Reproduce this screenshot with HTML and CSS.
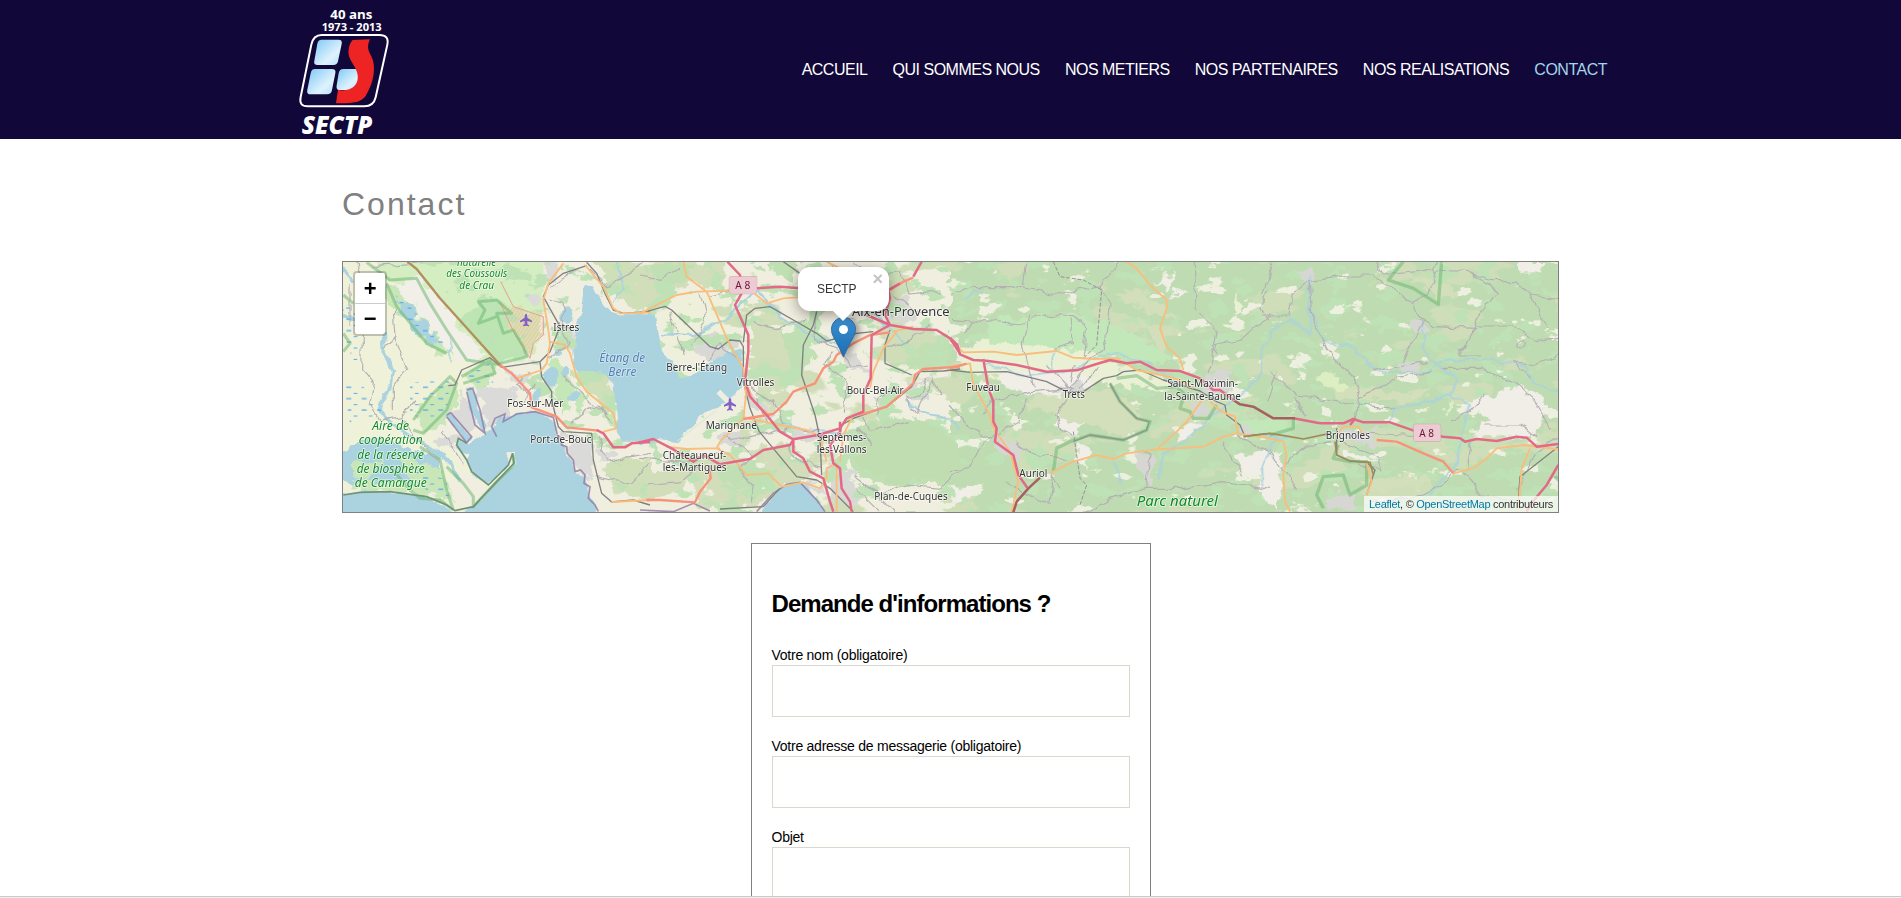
FILE: index.html
```html
<!DOCTYPE html>
<html lang="fr">
<head>
<meta charset="utf-8">
<title>Contact - SECTP</title>
<link rel="stylesheet" href="styles.css">
</head>
<body>
<header class="header">
  <svg class="logo" viewBox="0 0 390 417" width="130" height="139" role="img" aria-label="SECTP">
    <defs><linearGradient id="glass" x1="0" y1="0" x2="1" y2="1"><stop offset="0" stop-color="#7cc8f5"/><stop offset=".65" stop-color="#def2fd"/><stop offset="1" stop-color="#b5e0fa"/></linearGradient></defs>
    <text class="logo-small" x="151" y="56" font-size="37" textLength="126" lengthAdjust="spacingAndGlyphs">40 ans</text>
    <text class="logo-small" x="125" y="92" font-size="31" textLength="180" lengthAdjust="spacingAndGlyphs">1973 - 2013</text>
    <path d="M125 105H298Q328 105 322 134L287 292Q281 319 253 319H83Q56 319 62 291L94 134Q100 105 125 105Z" fill="none" stroke="#fff" stroke-width="6"/>
    <g fill="url(#glass)">
      <path d="M125 119H175Q188 119 185 132L174 184Q172 195 160 195H113Q100 195 103 182L112 131Q114 119 125 119Z"/>
      <path d="M105 207H155Q169 207 166 220L156 270Q154 283 141 283H92Q79 283 82 269L92 220Q94 207 105 207Z"/>
      <path d="M190 207H240L238 270H178Q166 272 171 250L176 220Q178 207 190 207Z"/>
    </g>
    <path d="M218 120L270 118C260 140 264 150 274 169C290 202 281 248 257 288C242 309 216 310 168 310L174 270C208 276 230 260 233 238C237 213 218 194 209 174C202 158 206 132 218 120Z" fill="#ee2424"/>
    <text class="logo-name" x="65" y="401" font-size="75" textLength="212" lengthAdjust="spacingAndGlyphs">SECTP</text>
  </svg>
  <nav class="nav">
    <a>ACCUEIL</a><a>QUI SOMMES NOUS</a><a>NOS METIERS</a><a>NOS PARTENAIRES</a><a>NOS REALISATIONS</a><a class="current">CONTACT</a>
  </nav>
</header>
<main class="main">
  <h1 class="title">Contact</h1>
  <div class="map">
    <svg class="map-art" viewBox="343 262 1215 250" width="1215" height="250">
      <defs>
        <filter id="wood" filterUnits="userSpaceOnUse" x="343" y="262" width="1215" height="250" color-interpolation-filters="sRGB">
          <feTurbulence type="fractalNoise" baseFrequency=".014 .028" numOctaves="5" seed="8"/>
          <feColorMatrix values="0 0 0 0 .81  0 0 0 0 .87  0 0 0 0 .72  22 0 0 0 -13"/>
          <feComposite in2="SourceAlpha" operator="in"/>
        </filter>
        <filter id="grass" filterUnits="userSpaceOnUse" x="343" y="262" width="1215" height="250" color-interpolation-filters="sRGB">
          <feTurbulence type="fractalNoise" baseFrequency=".04 .06" numOctaves="5" seed="23"/>
          <feColorMatrix values="0 0 0 0 .745  0 0 0 0 .885  0 0 0 0 .71  0 22 0 0 -13"/>
          <feComposite in2="SourceAlpha" operator="in"/>
        </filter>
        <filter id="clearing" filterUnits="userSpaceOnUse" x="343" y="262" width="1215" height="250" color-interpolation-filters="sRGB">
          <feTurbulence type="fractalNoise" baseFrequency=".035 .06" numOctaves="5" seed="41"/>
          <feColorMatrix values="0 0 0 0 .93  0 0 0 0 .94  0 0 0 0 .87  0 0 24 0 -16.2"/>
          <feComposite in2="SourceAlpha" operator="in"/>
        </filter>
        <filter id="rough" filterUnits="userSpaceOnUse" x="330" y="250" width="1240" height="275" color-interpolation-filters="sRGB">
          <feTurbulence type="fractalNoise" baseFrequency=".09" numOctaves="4" seed="3" result="n"/>
          <feDisplacementMap in="SourceGraphic" in2="n" scale="16" xChannelSelector="R" yChannelSelector="G"/>
        </filter>
        <filter id="wiggle" filterUnits="userSpaceOnUse" x="330" y="250" width="1240" height="275" color-interpolation-filters="sRGB">
          <feTurbulence type="fractalNoise" baseFrequency=".07" numOctaves="2" seed="5" result="n"/>
          <feDisplacementMap in="SourceGraphic" in2="n" scale="9" xChannelSelector="R" yChannelSelector="G"/>
        </filter>
        <pattern id="marsh" width="46" height="34" patternUnits="userSpaceOnUse"><path d="M3 6h15M25 24h11" stroke="#4ba6f0" stroke-width="3"/></pattern>
        <pattern id="hatch" width="9" height="9" patternUnits="userSpaceOnUse" patternTransform="rotate(35)"><path d="M0 0v9" stroke="#e9a892" stroke-width="2"/></pattern>
        <path id="plane" d="M0-19C4-19 4-12 4-7L18 2V7L4 3V12L9 16V19L0 17L-9 19V16L-4 12V3L-18 7V2L-4-7C-4-12-4-19 0-19Z" fill="#8461c4"/>
        <g id="tile-west-sea">
          <path d="M765 345L790 350 820 395 840 425 870 433H965V815L880 815 860 790 862 745 850 640 825 605 740 602 733 540 740 450 755 435Z"/>
          <path d="M480 785L510 745 560 732 615 725 670 742 682 795 710 845 735 905 765 915 780 980 805 1040H370L430 1010 500 935 552 880 555 848 540 850 535 885 475 945 425 905 410 870 415 850 385 835 380 810 420 820 465 795Z"/>
          <path d="M30 975L90 965 180 965 290 980 350 1005 375 1035H30Z"/>
          <path d="M350 735L362 728 425 805 410 820ZM408 660L425 655 450 720 470 770 460 790 435 760Z"/>
          <ellipse cx="710" cy="437" rx="19" ry="25"/><ellipse cx="666" cy="620" rx="23" ry="30"/><ellipse cx="704" cy="608" rx="10" ry="18"/><ellipse cx="730" cy="680" rx="19" ry="13"/><ellipse cx="620" cy="680" rx="10" ry="25"/><ellipse cx="682" cy="549" rx="8" ry="9"/>
        </g>
      </defs>

      <rect x="343" y="262" width="1215" height="250" fill="#f0eedf"/>
      <!-- land cover -->
      <g filter="url(#rough)">
        <g transform="translate(330 170) scale(.33333)">
          <path fill="#eff1d8" d="M0 240H240L500 590 300 780 420 900 300 960H0Z"/>
          <path fill="#d4edc1" d="M110 240H640V480L600 575 500 588 400 570 320 500 250 370 170 330Z"/>
          <path fill="#bde5b4" d="M400 460L450 390 520 390 550 500 590 555 500 583Z"/>
          <path fill="#c9e6b9" d="M120 350L220 340 300 420 360 560 300 540 230 450ZM395 610L480 570 495 620 450 660ZM260 720L370 620 385 680 340 770 270 790ZM60 900L160 860 260 850 370 1000 300 975 70 960Z"/>
          <path fill="#f1efe8" d="M180 340L280 320 400 480 470 560 400 580 340 530 260 420Z"/>
          <path fill="#abd3df" d="M195 390L240 400 320 510 310 530 240 470ZM20 850L130 800 330 860 330 910 270 940 20 930ZM30 420L90 440 70 455 30 445Z"/>
          <path fill="#c9e6b9" d="M70 870L160 880 120 930 60 920ZM200 850L330 900 360 970 240 930Z"/>
          <path fill="#dadad8" d="M640 250H690L680 350 650 330ZM700 460L735 480 725 570 690 500ZM520 595L600 610 590 650 550 640ZM400 665L440 760 400 800 360 760ZM430 650L560 650 530 740 480 770ZM700 830L790 800 790 940 740 890ZM690 790L780 800 700 815ZM590 365L625 385 620 405 595 390ZM800 840L850 830 860 860 810 870ZM310 810L400 790 420 810 330 830Z"/>
          <path fill="#cfdfb7" d="M780 250H960V410L900 420 850 350ZM720 600L830 610 855 720 780 680ZM820 880L960 870V990L850 960Z"/>
          <path fill="#c5e6b7" d="M660 580L690 570 740 650 700 740ZM840 720L860 720 860 790 820 750ZM730 640L770 690 740 750Z"/>
          <path fill="#dcdeb2" d="M510 397L560 415 640 440 640 495 610 520 600 565 550 485Z"/>
        </g>
        <g transform="translate(640 255) scale(.33333)">
          <path fill="#d2ddb9" d="M0 0H250L260 100 150 85 0 170ZM330 200L390 160 500 240 490 400 400 470 330 370ZM130 620L440 560 540 650 430 690 350 760 180 760ZM10 660L150 640 120 720 20 730Z"/>
          <path fill="#eff0da" d="M60 190L150 120 280 130 300 250 150 270 120 340 80 260Z"/>
          <path fill="#c0dfb2" d="M20 20L160 25 140 80 60 90ZM420 200L500 210 520 300 470 410ZM620 520L760 480 880 500 980 570V690L760 690 640 660ZM740 250L960 240V340L820 345 740 320ZM230 660L320 610 410 650 340 740ZM350 0L480 0 460 90Z"/>
          <path fill="#d8d8d5" d="M145 275L225 230 300 265 240 310 190 310ZM750 110L800 120 830 190 760 210 720 150ZM330 410L420 480 380 490 320 440ZM225 540L320 520 310 570 240 570ZM590 290L650 290 680 350 620 340ZM810 380L880 370 860 440 800 430ZM690 420L770 430 720 470ZM570 620L640 660 670 770 570 770ZM480 680L550 680 560 730ZM440 520L560 530 540 560 450 555Z"/>
        </g>
        <g transform="translate(950 255) scale(.33333)">
          <path fill="#bfdbb1" d="M0 0H1860V800H0Z"/>
        </g>
      </g>
      <path filter="url(#wood)" d="M650 262H1558V512H740V430L700 262Z"/>
      <path filter="url(#grass)" d="M420 262H1558V512H640Z"/>
      <path filter="url(#clearing)" d="M560 262H1558V512H640V430Z"/>
      <g filter="url(#rough)">
        <g transform="translate(640 255) scale(.33333)">
          <path fill="#bfddb1" d="M640 540L760 490 880 505 960 570V670L760 680 660 640Z"/>
        </g>
        <g transform="translate(950 255) scale(.33333)">
          <path fill="#eaf0d4" d="M20 280L210 220 320 240 500 330 600 355 700 400 460 390 240 400 40 340ZM850 140l20-15-5 60z"/>
          <path fill="#c2e8ba" d="M110 190L330 180 500 210 660 300 640 330 420 290 120 260ZM860 500L1000 480 1020 530 900 540Z"/>
          <path fill="#f1eee8" d="M150 350L400 350 430 390 330 440 160 400ZM320 460l50-20-20 60 60 10-30 30-60-20zM610 80l60-25-10 50zM680 100l40 10-50 20zM700 510L770 500 680 570ZM380 560l50 30-20 50-30-30zM860 600L990 590 960 670 870 650ZM1540 440L1720 390 1790 470 1760 540 1560 545 1620 490ZM930 610L1000 590 980 770 930 720ZM1170 580L1310 630 1180 610ZM0 680L60 700 20 760ZM1740 410L1790 440 1770 500 1720 460ZM1690 22h90v30h-70z"/>
          <path fill="#d6d7d3" d="M770 350L830 350 850 410 790 430 750 390ZM560 600L610 600 600 690 570 650ZM720 450L770 440 780 490 730 490ZM130 540L210 570 200 620 150 590ZM1160 530L1270 520 1280 570 1180 560ZM1050 50l40-10 10 40-40 10zM1380 190l40 0 10 40-40 10zM1130 730L1200 710 1220 765 1120 765ZM1340 330l60-8 10 30-50 5zM870 520l40-10 0 30-30 0zM340 400l60-20 10 30-60 10z"/>
          <path fill="#d2dfba" d="M200 440L330 420 480 400 600 500 520 550 340 490ZM1130 390L1380 410 1450 390 1400 440 1180 430ZM560 190L660 230 640 300ZM490 110L560 105 680 190 560 160ZM1230 680l200-20 20 30-180 20zM1370 60l130 30 30 40-60 0z"/>
          <path fill="#dcefc2" d="M1095 360l40-8 60 35-10 20-50-15zM1485 440l20-8-15 50-12 5z"/>
        </g>
      </g>

      <!-- water -->
      <g filter="url(#wiggle)" fill="#abd3df">
        <g transform="translate(330 170) scale(.33333)">
          <use href="#tile-west-sea"/>
          <g fill="none" stroke="#abd3df">
            <path stroke-width="10" d="M30 290L75 335M160 490L163 550 187 600 180 650 152 710 165 745 260 810 340 860 390 930"/>
            <path stroke-width="4" d="M860 280L880 350 850 400M360 500V580"/>
          </g>
        </g>
        <g transform="translate(640 255) scale(.33333)">
          <path d="M-10 185L45 185 60 270 120 370 160 365 200 330 240 305 300 280 312 340 305 400 270 435 195 470 110 560 50 555-10 570Z"/>
          <path d="M350 790L420 700 480 680 530 730 565 790Z"/>
          <g fill="none" stroke="#abd3df" stroke-width="6">
            <path d="M60 235L160 240 260 190 350 100 420 180 530 250 590 265M400 500L520 530 660 540M800 430L840 470 900 480 960 520M690 160L730 210 790 260"/>
          </g>
        </g>
        <g transform="translate(950 255) scale(.33333)" fill="none" stroke="#a9d2e0" stroke-width="5">
          <path d="M50 130l25-20 25-5M110 325L220 365 300 355 390 340 470 290 540 310 600 330 680 380M310 290v55M620 680L640 600 720 550 800 470 870 420 930 370 940 275 970 220 1020 190 1080 240 1080 60M1080 150L1120 260 1200 270 1280 350 1430 355 1460 325 1520 380 1500 420 1560 450 1530 580 1520 620 1440 720M1410 200L1430 300 1460 325 1560 310 1660 320 1720 330 1750 380 1825 415M1500 420L1330 465 1320 500M490 620l30 65M970 545L960 590 930 640 935 690M930 540L1020 550"/>
        </g>
      </g>
      <g transform="translate(330 170) scale(.33333)">
        <path fill="url(#marsh)" d="M190 360L330 500 350 540 250 490ZM390 610L480 580 490 640 440 660ZM240 640L360 620 350 740 240 740ZM45 400L90 440 80 600 50 520ZM40 640L100 650 160 730 60 760ZM200 880L350 930 360 1000 300 970Z"/>
        <path fill="url(#hatch)" d="M510 397L560 415 640 440 640 495 610 520 600 565 550 485Z"/>
        <path fill="none" stroke="#e7a28e" stroke-width="3" d="M512 335L550 410 640 440 640 495 610 520 600 565 550 485 510 397"/>
        <g fill="none" stroke="#65b36d" stroke-opacity=".5" stroke-width="9" stroke-linejoin="round">
          <path d="M110 277L180 330 260 325 300 400 350 480 410 570 500 583 590 560 580 530 550 480 520 490 500 430 545 430 500 390 445 395 465 420 445 460 500 440M170 340L200 410 290 520 350 550M395 620L480 570 495 610 400 640M250 750L300 680 360 620 380 640 350 720 280 790 250 780M40 375L70 400M40 545L60 520 40 490M370 1020L330 990 270 985 240 960 180 890M270 830L330 870 350 960 370 1020M430 1015L430 980 400 940 350 890M430 1010L500 935 552 885 548 850"/>
        </g>
        <path fill="none" stroke="#6f9573" stroke-width="5" d="M40 975L90 967 180 965 290 980 350 1005 375 1022 430 1010 500 935 552 880 548 850 535 885 475 945 425 905 410 870 380 825 385 805 410 820"/>
        <path fill="none" stroke="#9277a5" stroke-width="5" stroke-opacity=".8" d="M350 735L362 728 425 800 410 818 350 740M410 660L428 655 450 720 465 790 435 765 410 665M500 800L485 770 495 745 525 732 520 755 560 732 615 725 670 742 682 795 690 800 695 825 710 830 712 850 730 870 735 905 752 900 765 915 762 940 780 950 775 985 795 1005 805 1024"/>
      </g>
      <g transform="translate(640 255) scale(.33333)" fill="none">
        <path stroke="#9277a5" stroke-width="5" stroke-opacity=".8" d="M0 765L100 770 160 745 210 768M350 770L400 715 440 688 480 682 530 735 555 770"/>
        <path stroke="#f0eedf" stroke-width="16" d="M235 410L295 470M275 435L300 425"/>
        <path stroke="#d7e8cc" stroke-width="3" d="M110 560L230 465"/>
        <use href="#plane" x="270" y="448"/>
      </g>
      <use href="#plane" transform="translate(526 320) scale(.33333)"/>

      <!-- minor roads -->
      <g filter="url(#wiggle)" fill="none" stroke="#b4b0b4" stroke-width="3.5">
        <g transform="translate(330 170) scale(.33333)">
          <path d="M80 277L100 350 95 600 130 640 120 700 150 750 215 740 260 690M165 530L195 500 190 420M190 500L230 600 190 650 190 720M130 290L280 277M215 740L270 820 330 870M340 780L400 880M660 390L700 400 700 470 740 480M690 460L720 520 660 560M780 300L830 350 960 270M700 620L760 680 840 740M720 760L800 700 850 760M660 350L740 300M805 800L830 870 960 850M800 920L900 940 960 880M60 340V470M600 610L560 640 600 670M610 640L580 700"/>
        </g>
        <g transform="translate(640 255) scale(.33333)">
          <path d="M0 60L60 70 120 40M150 270L200 200 180 110M90 170L130 300M200 320L240 270 300 320M210 120L310 100M340 200L400 220 500 190M500 130L530 170 520 250 590 280 640 340M580 290L550 330 620 370 610 470M620 340L690 330M540 530L440 520 330 550 250 540M260 540L340 600 300 640M230 590L150 620 0 610M20 690L120 680 180 630M300 640L340 690 330 750M640 660L720 720 800 690 900 700 960 650M650 520L700 570M860 370L840 430 800 420 830 480 880 370 900 420M640 20L700 60 780 50 810 120 900 110M760 120L830 170 900 160M760 190L720 120 740 70M330 400L400 440 430 510M350 430L380 500M740 280L800 260 870 210M550 120L600 180 640 190M560 20L600 60 590 130M710 480L720 430 770 400M540 640L480 620 440 570M670 480L690 530 800 500M650 700L720 770M680 690L760 770"/>
        </g>
        <g transform="translate(950 255) scale(.33333)">
          <path d="M0 120L70 95 180 95 320 120 450 95 480 60 510 20M230 20L220 95M450 95L480 150 470 260 400 340 360 400M0 190L100 200 220 210 280 180 370 185 410 220 400 300M70 190L50 240M240 180L220 270 250 400M360 190L370 260 310 280M370 400L320 480 330 520 370 545M390 400L440 340M375 400L240 410 120 440M360 380L370 330M360 405L290 330M0 650L60 640 100 560 210 500 230 430M130 430L100 480M0 450L60 520 130 550M200 560L260 600 350 610M160 680L240 720 300 750 310 660 330 700M590 700L600 600 570 590M590 700L480 730 400 770M590 700L700 700 820 680 960 700M730 20L735 160 800 230 790 270 880 250 960 175M800 270L770 360M790 270L810 300M820 560L850 620 880 660M860 540L960 600M960 100L930 160 950 200"/>
          <path d="M940 120L970 20M930 180L1020 180 1030 120 1080 80 1190 60 1270 60 1380 140 1420 190 1360 320M1080 80L1090 200 1130 280 1190 350 1230 400 1220 460 1215 500M1280 20L1300 60 1400 50 1450 40 1460 20M1385 150L1460 80 1450 45 1560 50 1620 80 1700 80 1740 120 1825 130M1560 50L1640 110 1590 180 1580 210 1690 210 1760 260 1825 250M1410 190L1450 215 1580 220 1530 290M1740 120L1760 170 1800 220M1580 210L1530 300 1590 300M1270 350L1360 330 1430 320M1220 430L1290 400 1340 370 1450 350M960 350L1040 420 1220 450 1340 460M980 350L950 440M1040 430L1060 480M960 590L1040 700M1140 560L1050 580 1000 640M1180 560L1290 610 1290 650 1230 620M1220 530L1420 540M1480 340L1590 340 1690 380 1750 430 1800 520M1690 320L1740 370M1600 420L1560 470 1500 500M1520 640L1480 690 1420 720 1350 730 1260 750M1540 650L1600 720 1690 740M1550 640L1560 560M1760 540L1710 510 1600 510M1825 550L1760 590 1700 700M1825 300L1760 330 1690 320"/>
          <circle cx="1715" cy="268" r="11"/>
        </g>
      </g>
      <g transform="translate(950 255) scale(.33333)" fill="none">
        <g stroke="#69b46f" stroke-opacity=".5" stroke-width="10" stroke-linejoin="round">
          <path d="M480 385L510 440 560 490 600 500 590 525 520 555 420 540 360 560 320 580 310 650M500 370L560 362 620 400 680 395 720 435M700 430L690 460 720 470 730 490 775 490 800 450M1360 20L1315 75 1390 100 1465 148 1475 20M1030 490L1030 520 960 540M1165 570L1150 610 1200 620 1250 620 1250 690 1200 720 1180 660 1120 665 1100 720 1120 760M1815 665L1830 680"/>
        </g>
        <path stroke="#8b978c" stroke-width="4" d="M480 385L510 440 560 490 597 500 590 525 520 555 420 540 370 560"/>
        <path stroke="#9b8e9f" stroke-width="3" stroke-dasharray="12 5" d="M310 20L330 65 400 75 455 105 440 270 400 310M370 530L380 600 390 670 410 690 390 750"/>
      </g>

      <!-- railways -->
      <g fill="none" stroke="#808080" stroke-width="4" stroke-linejoin="round">
        <path transform="translate(330 170) scale(.33333)" d="M355 647L375 645 395 600 480 563 515 592 630 575 660 545 690 470 640 380 655 345 700 310 770 287M630 575L635 620 665 665 665 690 685 770 700 785 785 790 790 870 815 970 845 996 910 990 960 1005M770 277L800 310 825 370 850 420 880 430 960 424"/>
        <path transform="translate(640 255) scale(.33333)" d="M0 175L75 154 95 165 210 275 235 282 270 255 300 258 310 275 310 380 330 460 358 530 470 665 530 675 570 700 640 770M310 262L320 180 345 160 390 155 460 195 530 235 560 258 650 235 700 230M530 170L520 210 490 270 485 360 525 480 540 550 545 660M430 20L480 55 495 110M750 225L735 270 735 325 815 360M960 342L910 348 840 350 815 395 740 455 640 490 605 510 600 540M240 762L370 755 420 700"/>
        <path transform="translate(950 255) scale(.33333)" d="M0 345L60 352 170 350 290 380 350 410 400 410 460 370 500 362 520 350 570 345 640 375 750 408 800 440 825 450 830 480 870 510 885 545 910 540 960 535M1160 520L1160 600 1200 618 1250 622 1275 645 1250 720M1825 575L1710 665 1705 740"/>
      </g>

      <!-- main roads -->
      <g fill="none" stroke="#f9bd7c" stroke-width="5.5" stroke-linejoin="round">
        <path transform="translate(330 170) scale(.33333)" d="M700 280L655 340 640 390 655 480 660 520 650 580 635 600 560 625M660 515L705 525 720 550 740 620 770 665 850 730 860 775 820 785M765 285L820 350 850 415 870 430 960 428M845 996L960 990"/>
        <path transform="translate(640 255) scale(.33333)" d="M130 20L140 65 200 110 235 190 265 260 310 340 318 420 310 490 240 560 230 580 270 600 320 660 385 655 425 695 490 682 540 700 560 670 560 640 590 625 590 770M0 175L110 120 170 110 330 105 380 145 430 130 500 125M80 575L140 582 200 580 240 580M320 490L420 510 500 525 540 545 560 620M770 230L730 280 700 350 690 400M760 230L820 215M700 470L640 480 610 540 600 620M560 20L600 40M318 380L340 440 390 480"/>
        <path transform="translate(950 255) scale(.33333)" d="M0 255L40 292 130 290 200 300 320 288 370 308 430 312 500 310 560 345 640 362 690 375 730 400M530 20L560 40 600 90 650 135 650 160 630 220 650 275 690 310 700 345M300 655L370 620 440 600 490 612 530 595 620 583 760 575 820 545 860 535 960 550 1000 560 1010 600 1000 660 1005 740 1020 770M760 430L710 500 680 530 620 583M780 440L815 470 855 485 865 535M0 335L60 325 70 390 120 480 130 520 180 590 205 680 185 770M1160 540L1180 515 1225 515 1240 540M1250 625L1265 680 1250 720M1510 655L1570 640 1610 610 1640 580 1720 570 1825 583M1740 580L1715 640 1705 770"/>
      </g>
      <g fill="none" stroke="#f8937a" stroke-width="7" stroke-linejoin="round">
        <path transform="translate(330 170) scale(.33333)" stroke="#b1905e" d="M232 275L260 297 330 385 515 590"/>
        <path transform="translate(330 170) scale(.33333)" d="M510 585L545 610 600 670 605 712 680 740 710 772 805 782M950 990H960"/>
        <path transform="translate(640 255) scale(.33333)" d="M310 492L400 477 440 440 460 410 525 385 550 340 580 320 590 300 640 265 690 240 750 232M960 335L850 342 825 360 820 385 740 455 660 480M20 735L60 735 165 742 180 710 212 670 208 635M750 105L790 80 820 68"/>
        <path transform="translate(950 255) scale(.33333)" d="M0 340L50 326M1280 555L1340 560 1420 595 1480 620 1510 655"/>
      </g>
      <g fill="none" stroke="#e36a86" stroke-width="7.5" stroke-linejoin="round">
        <path transform="translate(330 170) scale(.33333)" d="M800 780L820 790 850 832 885 832 905 820 960 816"/>
        <path transform="translate(640 255) scale(.33333)" d="M262 20L300 60 305 115 285 150 325 240 325 290 315 380 330 425 380 480 420 530 460 553 535 540 600 520 620 490 670 470 670 420 692 370 695 240 750 210 820 222 890 225 930 250 960 295M350 100L420 95 480 100M680 180L750 210 735 180 750 130 745 105 780 85M845 20L820 65M-5 563L40 552 100 583 160 620 190 600 240 628 330 612 370 585 450 570 460 555 460 590 490 610 510 650 550 670 570 740 580 770M600 500L600 530 570 570 580 625 600 640 605 700 630 740 635 770M540 545L560 545"/>
        <path transform="translate(950 255) scale(.33333)" d="M0 248L22 270 30 298 70 315 110 317 200 330 290 350 380 346 430 330 480 315 530 325 570 320 620 345 690 348 750 370 790 405 810 405 850 435M100 312L115 400 130 440 130 500 140 520 135 560 190 600 205 660 232 698M1030 490L1110 505 1180 505 1210 492 1240 502 1320 502 1400 530 1480 545 1530 550 1545 560 1580 552 1640 558 1700 545 1730 548 1760 575 1825 567M1200 510L1215 492M1825 630L1790 690 1740 750 1730 770"/>
        <path transform="translate(950 255) scale(.33333)" stroke="#a85f60" d="M850 435L870 448 910 455 970 490 1035 490M270 668L235 700 200 740 190 772"/>
        <path transform="translate(950 255) scale(.33333)" stroke="#a18a58" stroke-width="5" d="M880 545L960 535 1020 545 1060 552 1140 535M1155 560L1160 600 1200 618 1260 622 1270 660"/>
      </g>

      <!-- labels -->
      <g class="labels" font-size="30">
        <g transform="translate(330 170) scale(.33333)">
          <g class="park" font-size="31"><text x="381" y="287" textLength="118" lengthAdjust="spacingAndGlyphs">naturelle</text><text x="349" y="321" textLength="183" lengthAdjust="spacingAndGlyphs">des Coussouls</text><text x="388" y="357" textLength="104" lengthAdjust="spacingAndGlyphs">de Crau</text></g>
          <g class="park" font-size="36"><text x="127" y="780" textLength="110" lengthAdjust="spacingAndGlyphs">Aire de</text><text x="86" y="823" textLength="192" lengthAdjust="spacingAndGlyphs">coopération</text><text x="82" y="866" textLength="200" lengthAdjust="spacingAndGlyphs">de la réserve</text><text x="80" y="908" textLength="204" lengthAdjust="spacingAndGlyphs">de biosphère</text><text x="74" y="952" textLength="216" lengthAdjust="spacingAndGlyphs">de Camargue</text></g>
          <g class="lake" font-size="36"><text x="808" y="575" textLength="137" lengthAdjust="spacingAndGlyphs">Étang de</text><text x="835" y="617" textLength="84" lengthAdjust="spacingAndGlyphs">Berre</text></g>
          <text x="670" y="484" textLength="78" lengthAdjust="spacingAndGlyphs">Istres</text><text x="532" y="712" textLength="168" lengthAdjust="spacingAndGlyphs">Fos-sur-Mer</text><text x="601" y="818" textLength="184" lengthAdjust="spacingAndGlyphs">Port-de-Bouc</text>
        </g>
        <g transform="translate(640 255) scale(.33333)">
          <text x="79" y="347" textLength="182" lengthAdjust="spacingAndGlyphs">Berre-l'Étang</text><text x="290" y="392" textLength="113" lengthAdjust="spacingAndGlyphs">Vitrolles</text><text x="197" y="523" textLength="154" lengthAdjust="spacingAndGlyphs">Marignane</text><text x="68" y="612" textLength="191" lengthAdjust="spacingAndGlyphs">Châteauneuf-</text><text x="68" y="649" textLength="192" lengthAdjust="spacingAndGlyphs">les-Martigues</text><text x="620" y="417" textLength="171" lengthAdjust="spacingAndGlyphs">Bouc-Bel-Air</text><text x="530" y="557" textLength="149" lengthAdjust="spacingAndGlyphs">Septèmes-</text><text x="530" y="593" textLength="150" lengthAdjust="spacingAndGlyphs">les-Vallons</text><text x="703" y="734" textLength="220" lengthAdjust="spacingAndGlyphs">Plan-de-Cuques</text><text x="636" y="182" font-size="37" textLength="293" lengthAdjust="spacingAndGlyphs">Aix-en-Provence</text>
          <rect x="268" y="65" width="82" height="51" rx="5" class="shield"/><text class="road" x="286" y="102" textLength="45" lengthAdjust="spacingAndGlyphs">A 8</text>
        </g>
        <g transform="translate(950 255) scale(.33333)">
          <text x="49" y="409" textLength="101" lengthAdjust="spacingAndGlyphs">Fuveau</text><text x="338" y="430" textLength="67" lengthAdjust="spacingAndGlyphs">Trets</text><text x="208" y="665" textLength="84" lengthAdjust="spacingAndGlyphs">Auriol</text><text x="652" y="397" textLength="212" lengthAdjust="spacingAndGlyphs">Saint-Maximin-</text><text x="643" y="434" textLength="230" lengthAdjust="spacingAndGlyphs">la-Sainte-Baume</text><text x="1127" y="553" textLength="133" lengthAdjust="spacingAndGlyphs">Brignoles</text>
          <text class="park" x="560" y="754" font-size="44" textLength="244" lengthAdjust="spacingAndGlyphs">Parc naturel</text>
          <rect x="1391" y="508" width="81" height="51" rx="5" class="shield"/><text class="road" x="1408" y="545" textLength="44" lengthAdjust="spacingAndGlyphs">A 8</text>
        </g>
      </g>
    </svg>
    <div class="zoom"><span class="zoom-btn">+</span><span class="zoom-btn">−</span></div>
    <svg class="marker" viewBox="0 0 25 41" width="25" height="41"><defs><linearGradient id="pin" x1="0" y1="0" x2="0" y2="1"><stop offset="0" stop-color="#3b8fd0"/><stop offset="1" stop-color="#1d6db3"/></linearGradient></defs><path d="M12.5.5C5.5.5.5 6 .5 12.4C.5 19 5 22.500 12.500 40C20 22.500 24.500 19 24.500 12.400C24.500 6 19.500.5 12.500.5Z" fill="url(#pin)" stroke="#2b6fa8"/><circle cx="12.500" cy="12.500" r="4.500" fill="#fff"/></svg>
    <div class="popup">SECTP<span class="close">×</span></div>
    <div class="credit"><a>Leaflet</a>, © <a>OpenStreetMap</a> contributeurs</div>
  </div>
  <form class="form">
    <h2 class="form-title">Demande d'informations ?</h2>
    <label class="field">Votre nom (obligatoire)<input class="input" type="text"></label>
    <label class="field">Votre adresse de messagerie (obligatoire)<input class="input" type="text"></label>
    <label class="field">Objet<input class="input" type="text"></label>
  </form>
</main>
<footer class="edge"></footer>
</body>
</html>
```

FILE: styles.css
```css
* { box-sizing: border-box; }
body { margin: 0; height: 898px; display: flex; flex-direction: column; overflow: hidden; background: #fff; color: #000; font: 14px/16px "Liberation Sans", Arial, sans-serif; letter-spacing: -.25px; }
.header { flex: none; display: flex; justify-content: space-between; height: 139px; padding: 0 294px 0 280px; background: #110839; }
.logo { display: block; overflow: visible; letter-spacing: 0; }
.logo-small { fill: #fff; font-family: "Open Sans", "Noto Sans", sans-serif; font-weight: 700; }
.logo-name { fill: #fff; font-family: "Open Sans", "Noto Sans", sans-serif; font-weight: 800; font-style: italic; }
.nav { display: flex; gap: 25.1px; padding-top: 61px; font-size: 16px; line-height: 18px; letter-spacing: -.5px; color: #fff; }
.current { color: #a5d5ea; }
.main { flex: 1; min-height: 0; overflow: hidden; padding: 45px 342px 0; }
.title { margin: 0; font-size: 32px; font-weight: 400; line-height: 40px; letter-spacing: 2px; color: #808080; }
.map { position: relative; width: 1217px; height: 252px; margin-top: 37px; border: 1px solid #808080; overflow: hidden; }
.map-art { display: block; letter-spacing: 0; }
.labels { font-family: "Noto Sans", sans-serif; fill: #333; stroke: #fff; stroke-opacity: .65; stroke-width: 5px; stroke-linejoin: round; paint-order: stroke; }
.park { fill: #128a25; font-style: italic; }
.lake { fill: #5580b8; font-style: italic; stroke-opacity: .4; }
.shield { fill: #edcbd3; stroke: #c98795; stroke-width: 3px; }
.road { fill: #6c1438; stroke: none; }
.zoom { position: absolute; left: 10px; top: 9px; border: 2px solid rgba(0, 0, 0, .2); border-radius: 4px; background: #fff; background-clip: padding-box; }
.zoom-btn { display: block; width: 30px; height: 30px; font: bold 22px/30px "Liberation Sans", sans-serif; text-align: center; }
.zoom-btn:first-child { height: 31px; border-bottom: 1px solid #ccc; line-height: 32px; }
.marker { position: absolute; left: 488px; top: 55px; filter: drop-shadow(4px 1px 3px rgba(0, 0, 0, .35)); }
.popup { position: absolute; left: 455px; top: 5px; width: 91px; height: 44px; padding: 14px 19px; border-radius: 12px; background: #fff; box-shadow: 0 3px 14px rgba(0, 0, 0, .4); font-size: 12px; letter-spacing: -.1px; color: #333; }
.popup::after { content: ""; position: absolute; left: 34px; top: 43px; border: 11px solid transparent; border-top-color: #fff; border-bottom: 0; }
.close { position: absolute; right: 6px; top: 4px; font: bold 18px/16px "Liberation Sans", sans-serif; color: #c3c3c3; }
.credit { position: absolute; right: 0; bottom: 0; padding: 0 5px; background: rgba(255, 255, 255, .7); font-size: 11px; line-height: 16px; letter-spacing: -.28px; color: #333; white-space: nowrap; }
.credit a { color: #0078a8; }
.form { width: 400px; margin: 30px auto 0; padding: 46px 20px 0; border: 1px solid #808080; }
.form-title { margin: 0 0 28px; font-size: 24px; line-height: 28px; letter-spacing: -.95px; }
.field { display: block; margin-bottom: 20px; line-height: 19px; }
.input { display: block; width: 358px; height: 52px; padding: 0 10px; border: 1px solid #dad7cc; background: #fff; outline: 0; }
.edge { flex: none; height: 2px; border-top: 1px solid #c9c9c9; background: #efefef; }
```
